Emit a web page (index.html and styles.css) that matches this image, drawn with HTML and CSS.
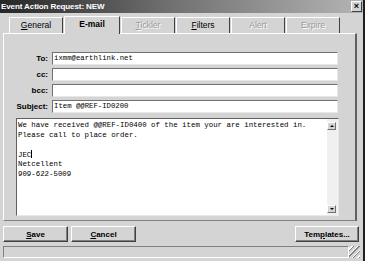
FILE: index.html
```html
<!DOCTYPE html>
<html>
<head>
  <title>Event Action Request: NEW</title>
  <meta name="viewport" content="width=device-width, initial-scale=1.0">
  <link rel="stylesheet" href="styles.css">
</head>
<body>
  <div class="window">
    <div class="titlebar">
      <span class="title">Event Action Request: NEW</span>
      <span class="close-btn">&#215;</span>
    </div>

    <!-- tab strip -->
    <div class="tabs">
      <div class="tab"><u>G</u>eneral</div>
      <div class="tab active">E-mail</div>
      <div class="tab disabled"><u>T</u>ickler</div>
      <div class="tab"><u>F</u>ilters</div>
      <div class="tab disabled">Alert</div>
      <div class="tab disabled">Expire</div>
    </div>

    <div class="panel">
      <div class="field-row">
        <label>To:</label>
        <div class="input">ixmm@earthlink.net</div>
      </div>
      <div class="field-row">
        <label>cc:</label>
        <div class="input"></div>
      </div>
      <div class="field-row">
        <label>bcc:</label>
        <div class="input"></div>
      </div>
      <div class="field-row">
        <label>Subject:</label>
        <div class="input">Item @@REF-ID0200</div>
      </div>
      <div class="message">
        <div class="message-text">We have received @@REF-ID0400 of the item your are interested in.
Please call to place order.

JEC<span class="caret"></span>
Netcellent
909-622-5009</div>
        <div class="scrollbar">
          <div class="arrow up"></div>
          <div class="arrow down"></div>
        </div>
      </div>
    </div>

    <div class="button-row">
      <button class="btn"><u>S</u>ave</button>
      <button class="btn"><u>C</u>ancel</button>
      <div class="spacer"></div>
      <button class="btn templates">Tem<u>p</u>lates...</button>
    </div>

    <div class="statusbar">
      <div class="status-cell"></div>
      <div class="grip"></div>
    </div>
  </div>
</body>
</html>
```

FILE: styles.css
```css
body {
  margin: 0;
  background-color: #d4d4d4;
  font-family: "Liberation Sans", Arial, sans-serif;
  overflow: hidden;
}

.window {
  width: 363px;
  height: 261px;
  border-right: 2px solid #1e1e1e;
  display: flex;
  flex-direction: column;
}

.titlebar {
  height: 13px;
  display: flex;
  align-items: center;
  justify-content: space-between;
  background: linear-gradient(to right, #262626, #6e6e6e 45%, #b4b4b4);
  padding: 0 1px 0 1px;
}

.title {
  color: #fff;
  font-weight: bold;
  font-size: 8px;
  letter-spacing: -0.1px;
}

.close-btn {
  width: 9px;
  height: 9px;
  background-color: #d4d4d4;
  border: 1px solid;
  border-color: #fff #404040 #404040 #fff;
  font-size: 9px;
  line-height: 8px;
  text-align: center;
  font-weight: bold;
  color: #000;
}

/* tabs */
.tabs {
  display: flex;
  padding-left: 9px;
  margin-top: 3px;
  height: 17px;
  align-items: flex-end;
}

.tab {
  width: 54px;
  height: 16px;
  margin-right: 1px;
  box-sizing: border-box;
  border-top: 1px solid #fff;
  border-left: 1px solid #fff;
  border-right: 1px solid #404040;
  font-size: 8.5px;
  text-align: center;
  line-height: 15px;
  color: #000;
}

.tab.active {
  height: 18px;
  width: 56px;
  margin-bottom: -1px;
  font-weight: bold;
  font-size: 8.5px;
  position: relative;
  background-color: #d4d4d4;
  z-index: 1;
}

.tab.disabled {
  color: #9a9a9a;
  text-shadow: 1px 1px 0 #fff;
}

.panel {
  width: 354px;
  height: 188px;
  margin-left: 3px;
  box-sizing: border-box;
  border-top: 1px solid #fff;
  border-left: 1px solid #fff;
  border-right: 2px solid #606060;
  border-bottom: 1px solid #808080;
  padding-top: 18px;
  display: flex;
  flex-direction: column;
  gap: 3px;
}

.field-row {
  display: flex;
  align-items: center;
  height: 13px;
}

.field-row label {
  width: 44px;
  text-align: right;
  font-size: 8px;
  font-weight: bold;
  margin-right: 4px;
}

.input {
  width: 286px;
  height: 13px;
  box-sizing: border-box;
  background-color: #fff;
  border-top: 1px solid #707070;
  border-left: 1px solid #707070;
  border-bottom: 1px solid #e8e8e8;
  border-right: 1px solid #e8e8e8;
  font-family: "Liberation Mono", "Courier New", monospace;
  font-size: 7.3px;
  line-height: 11px;
  padding-left: 1px;
}

.message {
  margin-top: 2px;
  margin-left: 12px;
  width: 323px;
  height: 98px;
  box-sizing: border-box;
  background-color: #fff;
  border-top: 1px solid #606060;
  border-left: 1px solid #606060;
  border-bottom: 1px solid #e8e8e8;
  border-right: 1px solid #e8e8e8;
  display: flex;
}

.message-text {
  flex: 1;
  white-space: pre;
  font-family: "Liberation Mono", "Courier New", monospace;
  font-size: 7.4px;
  line-height: 9.6px;
  padding: 2px 0 0 1px;
}

.caret {
  display: inline-block;
  width: 1px;
  height: 8px;
  background-color: #000;
  vertical-align: -1px;
}

.scrollbar {
  width: 10px;
  background-color: #f0f0f0;
  display: flex;
  flex-direction: column;
  justify-content: space-between;
  padding: 3px 1px 2px 0;
}

.arrow {
  width: 9px;
  height: 8px;
  box-sizing: border-box;
  background-color: #d4d4d4;
  border: 1px solid;
  border-color: #fff #707070 #707070 #fff;
  position: relative;
}

.arrow:after {
  content: "";
  position: absolute;
  left: 2px;
  border-left: 2px solid transparent;
  border-right: 2px solid transparent;
}

.arrow.up:after {
  top: 2px;
  border-bottom: 2px solid #000;
}

.arrow.down:after {
  top: 2px;
  border-top: 2px solid #000;
}

/* bottom buttons */
.button-row {
  display: flex;
  margin-top: 5px;
  padding-left: 3px;
  width: 354px;
}

.btn {
  width: 65px;
  height: 16px;
  margin-right: 3px;
  padding: 0;
  background-color: #d4d4d4;
  border: 1px solid;
  border-color: #fff #404040 #404040 #fff;
  box-shadow: inset -1px -1px 0 #808080;
  font-family: "Liberation Sans", Arial, sans-serif;
  font-size: 8px;
  font-weight: bold;
  color: #000;
}

.spacer {
  flex: 1;
}

.templates {
  width: 64px;
  margin-right: -2px;
}

.statusbar {
  display: flex;
  margin-top: 4px;
  margin-left: 3px;
  width: 357px;
  height: 12px;
}

.status-cell {
  flex: 1;
  border: 1px solid;
  border-color: #808080 #fff #fff #808080;
}

.grip {
  width: 11px;
  background: repeating-linear-gradient(135deg, #d4d4d4 0 2px, #fff 2px 3px, #808080 3px 4px);
}
```
